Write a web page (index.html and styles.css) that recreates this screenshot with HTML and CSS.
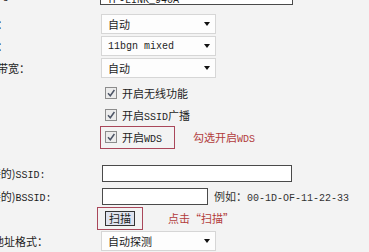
FILE: index.html
```html
<!DOCTYPE html>
<html lang="zh-CN">
<head>
  <meta charset="UTF-8">
  <title>无线设置</title>
  <link rel="stylesheet" href="styles.css">
</head>
<body>
  <div class="form">
    <div class="label"><span class="en">SSID</span>号：</div>
    <div class="field"><div class="textbox top-box"><span class="en">TP-LINK_940A</span></div></div>

    <div class="label">信道：</div>
    <div class="field"><div class="select"><span>自动</span><i class="arrow"></i></div></div>

    <div class="label">模式：</div>
    <div class="field"><div class="select"><span class="en">11bgn mixed</span><i class="arrow"></i></div></div>

    <div class="label">频段带宽：</div>
    <div class="field"><div class="select"><span>自动</span><i class="arrow"></i></div></div>

    <div class="label"></div>
    <div class="field">
      <label class="check"><span class="cb"><svg viewBox="0 0 10 10"><path d="M2 5.2 L4.3 7.8 L8.4 2"/></svg></span><span>开启无线功能</span></label>
    </div>

    <div class="label"></div>
    <div class="field">
      <label class="check"><span class="cb"><svg viewBox="0 0 10 10"><path d="M2 5.2 L4.3 7.8 L8.4 2"/></svg></span><span>开启<span class="en">SSID</span>广播</span></label>
    </div>

    <div class="label"></div>
    <div class="field">
      <label class="check mark"><span class="cb"><svg viewBox="0 0 10 10"><path d="M2 5.2 L4.3 7.8 L8.4 2"/></svg></span><span>开启<span class="en">WDS</span></span></label>
      <span class="note wds-note">勾选开启<span class="en">WDS</span></span>
    </div>

    <div class="label shift">(桥接的)<span class="en">SSID:</span></div>
    <div class="field shift"><div class="textbox ssid-box"></div></div>

    <div class="label">(桥接的)<span class="en">BSSID:</span></div>
    <div class="field">
      <div class="textbox bssid-box"></div>
      <span class="hint">例如：<span class="en">00-1D-OF-11-22-33</span></span>
    </div>

    <div class="label"></div>
    <div class="field">
      <div class="scan-box"><button class="scan">扫描</button></div>
      <span class="note scan-note">点击“扫描”</span>
    </div>

    <div class="label"><span class="en">MAC</span>地址格式：</div>
    <div class="field"><div class="select"><span>自动探测</span><i class="arrow"></i></div></div>
  </div>
</body>
</html>
```

FILE: styles.css
```css
body {
  margin: 0;
  background: #f3f3f3;
  font-family: "Noto Sans CJK SC", sans-serif;
  font-size: 11px;
  color: #1e1e1e;
  overflow: hidden;
  text-autospace: no-autospace;
}

.form {
  display: grid;
  grid-template-columns: 126px 1fr;
  grid-template-rows: 34px 24px 20px 24px 26px 18px 26px 36px 20px 24px 22px;
  margin: -22px 0 0 -25px;
}

.label {
  align-self: center;
  white-space: nowrap;
}

.field {
  display: flex;
  align-items: center;
  white-space: nowrap;
}

.shift {
  padding-top: 10px;
}

.en {
  font-family: "Liberation Mono", monospace;
  font-size: 10px;
}

.textbox {
  box-sizing: border-box;
  height: 17px;
  border: 1px solid #4a4a4a;
  background: #fff;
}

.top-box {
  width: 193px;
  height: 20px;
  margin-left: -1px;
  padding: 6px 0 0 6px;
  line-height: 12px;
}

.ssid-box {
  width: 190px;
  margin-left: 1px;
}

.bssid-box {
  width: 106px;
  margin-left: 1px;
}

.hint {
  margin-left: 6px;
  color: #333;
}

.select {
  box-sizing: border-box;
  width: 115px;
  height: 20px;
  border: 1px solid #d6d6d6;
  background: #fdfdfd;
  display: flex;
  align-items: center;
  justify-content: space-between;
  padding: 0 5px 0 6px;
}

.arrow {
  border-left: 3.5px solid transparent;
  border-right: 3.5px solid transparent;
  border-top: 4px solid #111;
}

.check {
  display: flex;
  align-items: center;
  gap: 5px;
  margin-left: 4px;
}

.cb {
  box-sizing: border-box;
  width: 12px;
  height: 12px;
  border: 1px solid #8c8c8c;
  background: #ececec;
  display: flex;
}

.cb svg {
  width: 10px;
  height: 10px;
  fill: none;
  stroke: #4d5566;
  stroke-width: 1.5;
}

.mark {
  box-sizing: border-box;
  width: 75px;
  height: 23px;
  margin-left: -1px;
  padding-left: 4px;
  border: 1px solid #a9475a;
}

.note {
  color: #b23b3b;
}

.wds-note {
  margin-left: 18px;
}

.scan-box {
  box-sizing: border-box;
  width: 46px;
  height: 23px;
  margin-left: -4px;
  border: 1px solid #a9475a;
  display: flex;
  align-items: center;
  justify-content: center;
}

.scan {
  width: 30px;
  height: 15px;
  padding: 0;
  border: 1px solid #333;
  background: #dfe3ee;
  font: inherit;
  line-height: 13px;
  color: #222;
}

.scan-note {
  margin-left: 25px;
}
```
